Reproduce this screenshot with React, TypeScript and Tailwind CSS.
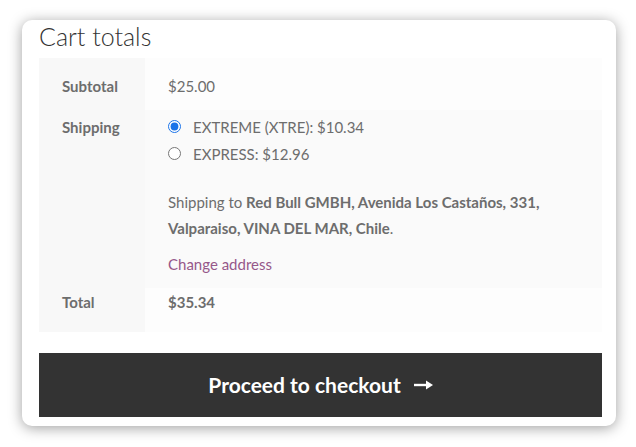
import React from 'react';

const font = { fontFamily: 'Lato, "Open Sans", sans-serif' };

function Row({
	label,
	thPad,
	tdPad,
	tdBg,
	children,
}: {
	label: string;
	thPad: string;
	tdPad: string;
	tdBg: string;
	children: React.ReactNode;
}) {
	return (
		<div className="grid grid-cols-[106px_1fr]">
			<div className={`bg-[#f8f8f8] px-[23px] font-bold text-[15px] leading-[24px] text-[#6d6d6d] ${thPad}`}>
				{label}
			</div>
			<div className={`px-[23px] text-[15px] leading-[24px] text-[#6d6d6d] ${tdBg} ${tdPad}`}>{children}</div>
		</div>
	);
}

function ShippingOption({ label, checked }: { label: string; checked?: boolean }) {
	return (
		<li className="flex h-[27px] items-center">
			<input
				type="radio"
				name="shipping"
				defaultChecked={checked}
				className="m-0 h-[13px] w-[13px] accent-[#1a73e8]"
			/>
			<span className="ml-[12px]">{label}</span>
		</li>
	);
}

export default function App() {
	return (
		<div className="min-h-[447px] bg-white pl-[22px] pt-[20px]" style={font}>
			<div className="flex h-[406px] w-[594px] flex-col rounded-[10px] bg-white pl-[17px] pr-[14px] pt-px shadow-[0_2px_14px_rgba(0,0,0,0.38)]">
				<h2 className="text-[25px] font-light leading-[30px] text-[#333]">Cart totals</h2>

				<div className="mt-[7px] flex flex-col">
					<Row label="Subtotal" thPad="pt-[16px] pb-[12px]" tdPad="pt-[16px] pb-[12px]" tdBg="bg-[#fdfdfd]">
						$25.00
					</Row>
					<Row label="Shipping" thPad="pt-[5px]" tdPad="pt-[3px] pb-[11px]" tdBg="bg-[#fafafa]">
						<ul>
							<ShippingOption label="EXTREME (XTRE): $10.34" checked />
							<ShippingOption label="EXPRESS: $12.96" />
						</ul>
						<p className="mt-[22px] leading-[26px]">
							Shipping to <strong className="font-bold">Red Bull GMBH, Avenida Los Castaños, 331, Valparaiso, VINA DEL MAR, Chile</strong>.
						</p>
						<a href="#" className="mt-[11px] block leading-[25px] text-[#96588a]">
							Change address
						</a>
					</Row>
					<Row label="Total" thPad="pt-[2px] pb-[18px]" tdPad="pt-[2px] pb-[18px]" tdBg="bg-[#fdfdfd]">
						<strong className="font-bold">$35.34</strong>
					</Row>
				</div>

				<button className="mt-[21px] flex h-[64px] w-full items-center justify-center gap-[13px] bg-[#333333] text-[21px] font-bold text-white">
					Proceed to checkout
					<svg width="19" height="10" viewBox="0 0 19 10" fill="none">
						<path d="M0 5h13" stroke="white" strokeWidth="2.4" />
						<path d="M12 0.5L19 5L12 9.5Z" fill="white" />
					</svg>
				</button>
			</div>
		</div>
	);
}
